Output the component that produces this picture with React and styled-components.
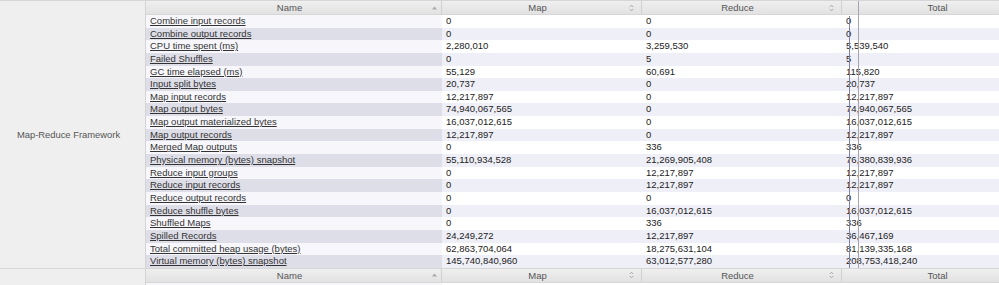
import React from "react";
import styled, { createGlobalStyle } from "styled-components";

const GlobalStyle = createGlobalStyle`
  html, body {
    margin: 0;
    padding: 0;
    background: #ffffff;
    overflow: hidden;
  }
  body {
    font-family: "Liberation Sans", Arial, sans-serif;
  }
`;

const COLS = "296px 200px 200px 200px";

const Page = styled.div`
  width: 1042px;
  font-family: "Liberation Sans", Arial, sans-serif;
  font-size: 9.5px;
  color: #222;
`;

const Group = styled.section`
  position: relative;
  display: grid;
  grid-template-columns: 146px 896px;
  border-top: 1px solid #d6d6d6;
`;

const GroupLabel = styled.div`
  display: flex;
  align-items: center;
  justify-content: center;
  box-sizing: border-box;
  padding-right: 8px;
  background: #efefef;
  border-right: 1px solid #d3d3d3;
  color: #555;
  font-size: 9.4px;
`;

const CounterTable = styled.div`
  display: flex;
  flex-direction: column;
`;

const HeaderRow = styled.div`
  display: grid;
  grid-template-columns: ${COLS};
  height: 13px;
  background: linear-gradient(#efefef, #e2e2e2);
  border-bottom: 1px solid #d6d6d6;
`;

const HeaderCell = styled.div`
  position: relative;
  box-sizing: border-box;
  padding: 0 12px 0 4px;
  text-align: center;
  line-height: 13px;
  color: #555;
  border-right: 1px solid #d0d0d0;
  white-space: nowrap;
`;

const SortIcon = styled.svg`
  position: absolute;
  right: ${(p) => p.$right}px;
  top: 50%;
  transform: translateY(-50%);
`;

const DataRow = styled.div`
  display: grid;
  grid-template-columns: ${COLS};
  height: 12.65px;
  line-height: 12.65px;
  background: ${(p) => (p.$odd ? "#efeff7" : "#ffffff")};
`;

const Cell = styled.div`
  box-sizing: border-box;
  padding-left: 4px;
  white-space: nowrap;
  overflow: hidden;
`;

const NameCell = styled(Cell)`
  background: ${(p) => (p.$odd ? "#dedee8" : "#f7f7fb")};
`;

const CounterLink = styled.a`
  color: #333;
  text-decoration: underline;
  cursor: pointer;
`;

const Marker = styled.div`
  position: absolute;
  left: ${(p) => p.$left}px;
  top: ${(p) => p.$top}px;
  bottom: 0;
  width: 1px;
  background: ${(p) => p.$color};
  pointer-events: none;
`;

const AscIcon = () => (
  <SortIcon $right={4} width="5" height="4" viewBox="0 0 5 4">
    <polygon points="2.5,0.5 5,3.5 0,3.5" fill="#a8a8a8" />
  </SortIcon>
);

const BothIcon = () => (
  <SortIcon $right={7} width="5" height="8" viewBox="0 0 5 8">
    <polyline points="0.8,3 2.5,1.2 4.2,3" fill="none" stroke="#a0a0a0" strokeWidth="0.9" />
    <polyline points="0.8,5 2.5,6.8 4.2,5" fill="none" stroke="#a0a0a0" strokeWidth="0.9" />
  </SortIcon>
);

const Header = () => (
  <HeaderRow>
    <HeaderCell>
      Name
      <AscIcon />
    </HeaderCell>
    <HeaderCell>
      Map
      <BothIcon />
    </HeaderCell>
    <HeaderCell>
      Reduce
      <BothIcon />
    </HeaderCell>
    <HeaderCell>
      Total
      <BothIcon />
    </HeaderCell>
  </HeaderRow>
);

const mapReduce = [
  ["Combine input records", "0", "0", "0"],
  ["Combine output records", "0", "0", "0"],
  ["CPU time spent (ms)", "2,280,010", "3,259,530", "5,539,540"],
  ["Failed Shuffles", "0", "5", "5"],
  ["GC time elapsed (ms)", "55,129", "60,691", "115,820"],
  ["Input split bytes", "20,737", "0", "20,737"],
  ["Map input records", "12,217,897", "0", "12,217,897"],
  ["Map output bytes", "74,940,067,565", "0", "74,940,067,565"],
  ["Map output materialized bytes", "16,037,012,615", "0", "16,037,012,615"],
  ["Map output records", "12,217,897", "0", "12,217,897"],
  ["Merged Map outputs", "0", "336", "336"],
  ["Physical memory (bytes) snapshot", "55,110,934,528", "21,269,905,408", "76,380,839,936"],
  ["Reduce input groups", "0", "12,217,897", "12,217,897"],
  ["Reduce input records", "0", "12,217,897", "12,217,897"],
  ["Reduce output records", "0", "0", "0"],
  ["Reduce shuffle bytes", "0", "16,037,012,615", "16,037,012,615"],
  ["Shuffled Maps", "0", "336", "336"],
  ["Spilled Records", "24,249,272", "12,217,897", "36,467,169"],
  ["Total committed heap usage (bytes)", "62,863,704,064", "18,275,631,104", "81,139,335,168"],
  ["Virtual memory (bytes) snapshot", "145,740,840,960", "63,012,577,280", "208,753,418,240"],
];

const hive = [["CREATED_FILES", "0", "240", "240"]];

const Rows = ({ data }) =>
  data.map(([name, map, reduce, total], i) => (
    <DataRow key={name} $odd={i % 2 === 1}>
      <NameCell $odd={i % 2 === 1}>
        <CounterLink>{name}</CounterLink>
      </NameCell>
      <Cell>{map}</Cell>
      <Cell>{reduce}</Cell>
      <Cell>{total}</Cell>
    </DataRow>
  ));

export default function App() {
  return (
    <Page>
      <GlobalStyle />
      <Group>
        <GroupLabel>Map-Reduce Framework</GroupLabel>
        <CounterTable>
          <Header />
          <Rows data={mapReduce} />
        </CounterTable>
        <Marker $left={849} $top={15} $color="#8080a0" />
        <Marker $left={858} $top={0} $color="#a4a4b4" />
      </Group>
      <Group>
        <GroupLabel />
        <CounterTable>
          <Header />
          <Rows data={hive} />
        </CounterTable>
      </Group>
    </Page>
  );
}
